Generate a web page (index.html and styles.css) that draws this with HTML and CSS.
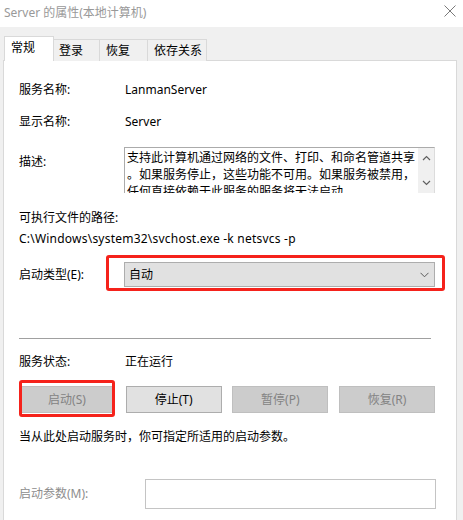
FILE: index.html
```html
<!DOCTYPE html>
<html lang="zh-CN">
<head>
<meta charset="utf-8">
<title>Server 的属性(本地计算机)</title>
<link rel="stylesheet" href="styles.css">
</head>
<body>
<div class="window">
  <div class="titlebar">
    <span class="title">Server 的属性(本地计算机)</span>
    <svg class="close" width="12" height="12" viewBox="0 0 12 12"><path d="M0.5 0.5 L11.5 11.5 M11.5 0.5 L0.5 11.5" stroke="#7a7a7a" stroke-width="1" fill="none"/></svg>
  </div>
  <div class="tabs">
    <div class="tab active t1">常规</div>
    <div class="tab t2">登录</div>
    <div class="tab t3">恢复</div>
    <div class="tab t4">依存关系</div>
  </div>
  <div class="panel">
    <div class="row r-name"><span class="label">服务名称:</span><span class="value">LanmanServer</span></div>
    <div class="row r-disp"><span class="label">显示名称:</span><span class="value">Server</span></div>
    <div class="row r-desc">
      <span class="label desc-label">描述:</span>
      <div class="desc">
        <div class="desc-text">
          <div>支持此计算机通过网络的文件、打印、和命名管道共享</div>
          <div>。如果服务停止，这些功能不可用。如果服务被禁用，</div>
          <div>任何直接依赖于此服务的服务将无法启动。</div>
        </div>
        <div class="scroll">
          <svg width="9" height="6" viewBox="0 0 9 6"><path d="M1 5 L4.5 1.5 L8 5" stroke="#606060" stroke-width="1.2" fill="none"/></svg>
          <svg width="9" height="6" viewBox="0 0 9 6"><path d="M1 1 L4.5 4.5 L8 1" stroke="#606060" stroke-width="1.2" fill="none"/></svg>
        </div>
      </div>
    </div>
    <div class="line r-pathlabel">可执行文件的路径:</div>
    <div class="line r-path">C:\Windows\system32\svchost.exe -k netsvcs -p</div>
    <div class="row r-type">
      <span class="label">启动类型(E):</span>
      <div class="combo">
        <span>自动</span>
        <svg width="9" height="6" viewBox="0 0 9 6"><path d="M0.5 0.8 L4.5 4.8 L8.5 0.8" stroke="#5a5a5a" stroke-width="1" fill="none"/></svg>
        <div class="mark mark-combo"></div>
      </div>
    </div>
    <div class="sep"></div>
    <div class="row r-status"><span class="label">服务状态:</span><span class="value">正在运行</span></div>
    <div class="buttons">
      <div class="btn disabled">启动(S)<div class="mark mark-btn"></div></div>
      <div class="btn">停止(T)</div>
      <div class="btn disabled">暂停(P)</div>
      <div class="btn disabled">恢复(R)</div>
    </div>
    <div class="line r-hint">当从此处启动服务时，你可指定所适用的启动参数。</div>
    <div class="row r-param">
      <span class="label param-label">启动参数(M):</span>
      <div class="input"></div>
    </div>
  </div>
</div>
</body>
</html>
```

FILE: styles.css
```css
html, body {
  margin: 0;
  padding: 0;
}
body {
  width: 463px;
  height: 520px;
  overflow: hidden;
  background: #f0f0f0;
  font-family: "Noto Sans", "Noto Sans CJK SC", sans-serif;
  font-size: 12px;
  color: #000;
}
.window {
  display: flex;
  flex-direction: column;
}
.titlebar {
  height: 27px;
  background: #fff;
  display: flex;
  align-items: center;
  justify-content: space-between;
  padding: 0 7px 0 4px;
}
.title {
  color: #999;
  font-size: 12px;
  line-height: 16px;
  margin-top: -2px;
}
.close {
  margin-top: -5px;
}
.tabs {
  display: flex;
  align-items: flex-end;
  margin-top: 9px;
  padding-left: 4px;
  height: 25px;
  position: relative;
  z-index: 2;
}
.tab {
  box-sizing: border-box;
  height: 22px;
  border: 1px solid #d9d9d9;
  border-bottom: none;
  border-left: none;
  background: #f0f0f0;
  line-height: 21px;
  padding-left: 5px;
}
.tab.active {
  height: 25px;
  background: #fff;
  border-left: 1px solid #d9d9d9;
  padding-left: 6px;
  line-height: 22px;
}
.t1 { width: 50px; }
.t2 { width: 46px; }
.t3 { width: 48px; padding-left: 6px; }
.t4 { width: 59px; padding-left: 6px; }
.panel {
  position: relative;
  z-index: 1;
  box-sizing: border-box;
  margin-left: 3px;
  width: 454px;
  height: 470px;
  margin-top: -1px;
  background: #fff;
  border: 1px solid #d9d9d9;
  padding: 19px 0 0 15px;
}
.row {
  display: flex;
  align-items: flex-start;
  line-height: 20px;
}
.label {
  width: 105px;
  flex: none;
}
.value {
  padding-left: 1px;
}
.r-disp { margin-top: 12px; }
.r-desc { margin-top: 15px; }
.desc-label { padding-top: 5px; }
.desc {
  width: 311px;
  height: 46px;
  box-sizing: border-box;
  border-top: 1px solid #ababab;
  border-left: 1px solid #ababab;
  border-right: 1px solid #dcdcdc;
  display: flex;
  overflow: hidden;
}
.desc-text {
  flex: 1;
  padding: 1px 0 0 2px;
  line-height: 17px;
  white-space: nowrap;
  overflow: hidden;
}
.scroll {
  width: 16px;
  background: #f0f0f0;
  display: flex;
  flex-direction: column;
  align-items: center;
  justify-content: space-between;
  padding: 7px 0 7px;
  box-sizing: border-box;
}
.line {
  line-height: 20px;
}
.r-pathlabel { margin-top: 15px; }
.r-path {
  margin-top: 1px;
  letter-spacing: 0.22px;
}
.r-type {
  margin-top: 13px;
  align-items: center;
}
.combo {
  position: relative;
  width: 311px;
  height: 25px;
  box-sizing: border-box;
  background: #e1e1e1;
  border: 1px solid #adadad;
  display: flex;
  align-items: center;
  justify-content: space-between;
  padding: 0 5px 0 4px;
}
.mark {
  position: absolute;
  box-sizing: border-box;
  border: 3px solid #f5221b;
  border-radius: 3px;
}
.mark-combo {
  left: -19px;
  top: -8px;
  width: 339px;
  height: 36px;
}
.sep {
  margin-top: 51px;
  width: 412px;
  height: 1px;
  background: #a0a0a0;
}
.r-status { margin-top: 13px; }
.buttons {
  margin-top: 14px;
  width: 416px;
  display: flex;
  justify-content: space-between;
}
.btn {
  position: relative;
  box-sizing: border-box;
  width: 96px;
  height: 27px;
  background: #e1e1e1;
  border: 1px solid #adadad;
  text-align: center;
  line-height: 25px;
}
.btn.disabled {
  background: #cccccc;
  border-color: #bfbfbf;
  color: #838383;
}
.mark-btn {
  left: -1px;
  top: -7px;
  width: 96px;
  height: 37px;
}
.r-hint { margin-top: 14px; }
.r-param {
  margin-top: 32px;
  align-items: center;
}
.param-label {
  width: 126px;
  color: #8d8d8d;
}
.input {
  width: 291px;
  height: 30px;
  box-sizing: border-box;
  border: 1px solid #c4c4c4;
  background: #fff;
}
```
